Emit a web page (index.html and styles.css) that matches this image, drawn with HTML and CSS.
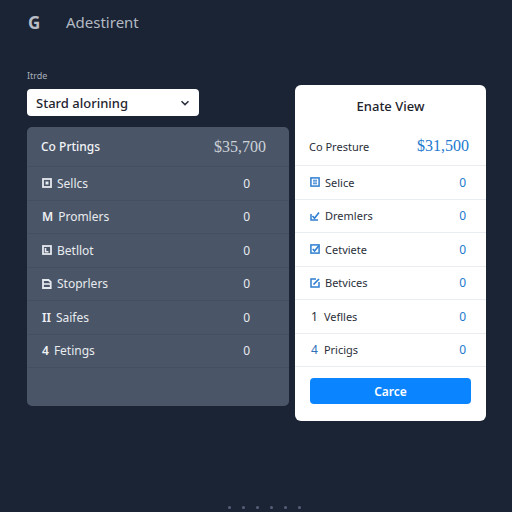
FILE: index.html
```html
<!DOCTYPE html>
<html>
<head>
<meta charset="utf-8">
<link rel="stylesheet" href="styles.css">
</head>
<body>
<header class="top">
  <span class="logo">G</span>
  <span class="app">Adestirent</span>
</header>
<main class="main">
  <section class="leftcol">
    <div class="label">Itrde</div>
    <div class="select">
      <span>Stard alorining</span>
      <svg width="10" height="6" viewBox="0 0 10 6"><path d="M1.5 1.2 L5 4.6 L8.5 1.2" fill="none" stroke="#2a303c" stroke-width="1.5"/></svg>
    </div>
    <div class="panel">
      <div class="phead"><span class="pt">Co Prtings</span><span class="pv">$35,700</span></div>
      <div class="prow"><span class="pl"><svg class="ic" viewBox="0 0 10 10"><rect x="1" y="1" width="8" height="8" fill="none" stroke="#e6e9ee" stroke-width="1.8"/><path d="M3.5 3.5h3v3h-3z" fill="#e6e9ee"/></svg>Sellcs</span><span>0</span></div>
      <div class="prow"><span class="pl"><span class="gl">M</span>Promlers</span><span>0</span></div>
      <div class="prow"><span class="pl"><svg class="ic" viewBox="0 0 10 10"><rect x="1" y="1" width="8" height="8" fill="none" stroke="#e6e9ee" stroke-width="1.8"/><path d="M3.5 3v3.8h3" fill="none" stroke="#e6e9ee" stroke-width="1.6"/></svg>Betllot</span><span>0</span></div>
      <div class="prow"><span class="pl"><svg class="ic" viewBox="0 0 10 10"><path d="M1 1h5.5l2.2 2v6H1z" fill="none" stroke="#e6e9ee" stroke-width="1.8"/><path d="M1 5h7" stroke="#e6e9ee" stroke-width="1.6"/></svg>Stoprlers</span><span>0</span></div>
      <div class="prow"><span class="pl"><span class="gl">II</span>Saifes</span><span>0</span></div>
      <div class="prow"><span class="pl"><span class="gl">4</span>Fetings</span><span>0</span></div>
    </div>
  </section>
  <section class="card">
    <h2 class="ctitle">Enate View</h2>
    <div class="chead"><span class="ct">Co Presture</span><span class="cv">$31,500</span></div>
    <div class="crow"><span class="cl"><svg class="ic" viewBox="0 0 10 10"><rect x="0.9" y="0.9" width="8.2" height="8.2" fill="none" stroke="#2f7fd0" stroke-width="1.5"/><path d="M3 3.3h4M3 5h4M3 6.7h4" stroke="#2f7fd0" stroke-width="1.1"/></svg>Selice</span><span class="cn">0</span></div>
    <div class="crow"><span class="cl"><svg class="ic" viewBox="0 0 10 10"><path d="M1 3v6h7" fill="none" stroke="#2f7fd0" stroke-width="1.5"/><path d="M2.5 5l2 2.2L9 1.5" fill="none" stroke="#2f7fd0" stroke-width="1.6"/></svg>Dremlers</span><span class="cn">0</span></div>
    <div class="crow"><span class="cl"><svg class="ic" viewBox="0 0 10 10"><rect x="0.9" y="0.9" width="8.2" height="8.2" fill="none" stroke="#2f7fd0" stroke-width="1.5"/><path d="M2.8 5l1.8 2L8.8 1.8" fill="none" stroke="#2f7fd0" stroke-width="1.6"/></svg>Cetviete</span><span class="cn">0</span></div>
    <div class="crow"><span class="cl"><svg class="ic" viewBox="0 0 10 10"><path d="M6 1H1v8h8V4" fill="none" stroke="#2f7fd0" stroke-width="1.5"/><path d="M3.5 6.5L9 1" stroke="#2f7fd0" stroke-width="1.7"/></svg>Betvices</span><span class="cn">0</span></div>
    <div class="crow"><span class="cl"><span class="gl2">1</span>Veflles</span><span class="cn">0</span></div>
    <div class="crow"><span class="cl"><span class="gl2 blue">4</span>Pricigs</span><span class="cn">0</span></div>
    <button class="btn">Carce</button>
  </section>
</main>
<div class="dots"><i></i><i></i><i></i><i></i><i></i><i></i></div>
</body>
</html>
```
FILE: styles.css
```css
html, body { margin: 0; padding: 0; }
body {
  width: 512px; height: 512px; overflow: hidden;
  background: #1b2435;
  font-family: "Noto Sans", "Open Sans", sans-serif;
  position: relative;
}
.top {
  height: 44px;
  display: flex; align-items: center;
  padding-left: 28px;
  box-sizing: border-box;
}
.logo { font-size: 17px; font-weight: 700; color: #b9bec6; width: 38px; }
.app { font-size: 15px; color: #b4bac3; }
.main {
  margin-top: 26px;
  padding-left: 27px;
  display: flex; gap: 6px; align-items: flex-start;
}
.leftcol { width: 262px; display: flex; flex-direction: column; }
.label { font-size: 9px; line-height: 11px; color: #a8aeb8; margin-bottom: 8px; }
.select {
  width: 172px; height: 27px; box-sizing: border-box;
  background: #ffffff; border-radius: 4px;
  display: flex; align-items: center; justify-content: space-between;
  padding: 0 9px 0 9px;
  font-size: 13px; font-weight: 500; color: #1f2530;
  margin-bottom: 11px;
}
.panel {
  height: 279px; background: #4a5567; border-radius: 5px;
  color: #eef0f3; display: flex; flex-direction: column;
}
.phead {
  height: 40px; box-sizing: border-box; padding: 0 23px 0 14px;
  display: flex; align-items: center; justify-content: space-between;
  border-bottom: 1px solid #445062;
}
.pt { font-size: 12px; font-weight: 500; color: #f2f4f7; }
.pv { font-family: "Liberation Serif", serif; font-size: 16px; color: #ccd1d8; }
.prow {
  height: 33.5px; box-sizing: border-box; padding: 0 39px 0 15px;
  display: flex; align-items: center; justify-content: space-between;
  border-bottom: 1px solid #445062;
  font-size: 12px; color: #e8ebef;
}
.pl { display: flex; align-items: center; }
.ic { width: 10px; height: 10px; margin-right: 5px; flex: none; }
.gl { font-size: 12px; font-weight: 600; margin-right: 5px; color: #eef0f3; }
.card {
  margin-top: 15px;
  width: 191px; height: 336px; box-sizing: border-box;
  background: #ffffff; border-radius: 6px;
  display: flex; flex-direction: column;
  padding-bottom: 17px;
}
.ctitle {
  margin: 0; height: 42px; box-sizing: border-box; padding-top: 12px;
  text-align: center; font-size: 13px; font-weight: 500; color: #1e232c; line-height: 18px;
}
.chead {
  height: 39px; box-sizing: border-box; padding: 0 17px 0 14px;
  display: flex; align-items: center; justify-content: space-between;
  border-bottom: 1px solid #e9ecf0;
}
.ct { font-size: 11px; color: #2a2f38; }
.cv { font-family: "Liberation Serif", serif; font-size: 16px; color: #2179cf; }
.crow {
  height: 33.5px; box-sizing: border-box; padding: 0 20px 0 15px;
  display: flex; align-items: center; justify-content: space-between;
  border-bottom: 1px solid #e9ecf0;
  font-size: 11px; color: #2b303a;
}
.cl { display: flex; align-items: center; }
.cn { color: #2179cf; font-size: 12px; }
.gl2 { font-size: 12px; margin-right: 6px; color: #2b303a; margin-left: 1px; }
.gl2.blue { color: #2f6fb8; }
.btn {
  margin: 11px 15px 0 15px; height: 26px;
  border: none; border-radius: 4px; background: #0a84ff;
  color: #ffffff; font-family: "Noto Sans", sans-serif; font-size: 12px; font-weight: 600;
}
.dots {
  position: absolute; left: 228px; top: 506px;
  display: flex; gap: 11px;
}
.dots i { display: block; width: 3px; height: 3px; border-radius: 50%; background: #56607a; }
```
